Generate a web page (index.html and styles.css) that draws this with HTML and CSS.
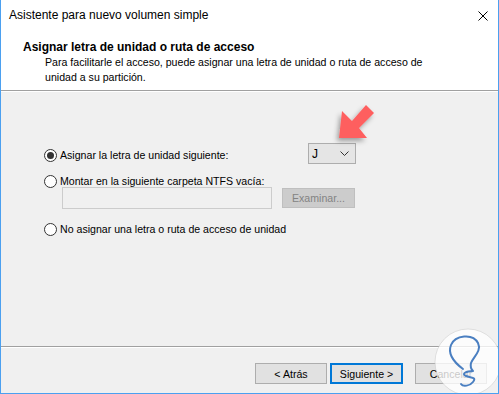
FILE: index.html
```html
<!DOCTYPE html>
<html lang="es">
<head>
    <meta charset="UTF-8">
    <title>Asistente para nuevo volumen simple</title>
    <link rel="stylesheet" href="styles.css">
</head>
<body>
    <div class="window">
        <div class="titlebar">
            <span class="title">Asistente para nuevo volumen simple</span>
            <svg class="close" width="10" height="10" viewBox="0 0 10 10">
                <path d="M0.5 0.5 L9.5 9.5 M9.5 0.5 L0.5 9.5" stroke="#000" stroke-width="1" fill="none"/>
            </svg>
        </div>

        <div class="header">
            <h1>Asignar letra de unidad o ruta de acceso</h1>
            <p class="description">Para facilitarle el acceso, puede asignar una letra de unidad o ruta de acceso de<br>unidad a su partición.</p>
        </div>

        <div class="content">
            <div class="option option-first">
                <div class="radio-label">
                    <span class="radio checked"></span>
                    <span>Asignar la letra de unidad siguiente:</span>
                </div>
                <div class="select">
                    <span class="select-value">J</span>
                    <svg width="9" height="5" viewBox="0 0 9 5">
                        <path d="M0.5 0.5 L4.5 4.5 L8.5 0.5" stroke="#333" stroke-width="1" fill="none"/>
                    </svg>
                </div>
            </div>

            <div class="option option-mount">
                <div class="radio-label">
                    <span class="radio"></span>
                    <span>Montar en la siguiente carpeta NTFS vacía:</span>
                </div>
            </div>

            <div class="path-row">
                <div class="path-field"></div>
                <div class="browse-btn">Examinar...</div>
            </div>

            <div class="option option-none">
                <div class="radio-label">
                    <span class="radio"></span>
                    <span>No asignar una letra o ruta de acceso de unidad</span>
                </div>
            </div>
        </div>

        <div class="footer">
            <div class="btn btn-back">&lt; Atrás</div>
            <div class="btn btn-next">Siguiente &gt;</div>
            <div class="btn btn-cancel">Cancelar</div>
        </div>

        <!-- flecha de anotación -->
        <svg class="arrow" width="60" height="60" viewBox="0 0 60 60">
            <defs>
                <filter id="sombra" x="-30%" y="-30%" width="160%" height="160%">
                    <feDropShadow dx="-2" dy="3" stdDeviation="2.5" flood-color="#000" flood-opacity="0.35"/>
                </filter>
            </defs>
            <polygon points="8,41 11,14 21,24 35,8 43,16 28,31 36,41" fill="#fe5f5f" filter="url(#sombra)"/>
        </svg>

        <!-- marca de agua -->
        <svg class="watermark" width="70" height="70" viewBox="0 0 70 70">
            <circle cx="35" cy="35" r="33" fill="rgba(255,255,255,0.78)" stroke="rgba(200,200,200,0.5)" stroke-width="1"/>
            <path d="M30 42 C22 36 14 28 18 18 C22 8 40 6 45 16 C49 24 40 30 38 36 C37 40 38 42 40 44 C33 44 28 47 33 49 C38 51 44 50 40 55 C37 59 30 60 28 57"
                  stroke="#4a7fc1" stroke-width="2" fill="none" stroke-linecap="round" stroke-linejoin="round"/>
        </svg>
    </div>
</body>
</html>
```

FILE: styles.css
```css
:root {
    --accent: #4ba0f0;
    --face: #f0f0f0;
    --button: #e1e1e1;
    --button-border: #adadad;
    --line: #a0a0a0;
}

body {
    margin: 0;
    font-family: 'Liberation Sans', Arial, sans-serif;
    font-size: 10.6px;
    color: #000;
}

.window {
    position: relative;
    width: 499px;
    height: 394px;
    box-sizing: border-box;
    border: 1px solid var(--accent);
    border-top: none;
    background-color: var(--face);
    display: flex;
    flex-direction: column;
    overflow: hidden;
}

.titlebar {
    height: 30px;
    background-color: #fff;
    display: flex;
    align-items: center;
    justify-content: space-between;
    padding: 0 10px 0 8px;
}

.title {
    font-size: 12px;
    line-height: 15px;
    margin-top: 1px;
}

.close {
    margin-top: 1px;
}

.header {
    height: 61px;
    box-sizing: border-box;
    background-color: #fff;
    padding: 10px 0 0 22px;
    border-bottom: 1px solid var(--line);
}

h1 {
    margin: 0;
    font-size: 12px;
    font-weight: bold;
    line-height: 15px;
}

.description {
    margin: 0 0 0 22px;
    line-height: 15px;
}

.content {
    flex: 1;
    border-top: 1px solid #fff;
    border-bottom: 1px solid var(--line);
    padding: 51px 0 0 43px;
}

.option {
    width: 312px;
    display: flex;
    align-items: center;
    justify-content: space-between;
}

.option-first {
    height: 21px;
}

.option-first .radio-label {
    margin-top: 3px;
}

.option-mount {
    height: 14px;
    margin-top: 10px;
}

.option-none {
    height: 14px;
    margin-top: 13px;
}

.radio-label {
    display: flex;
    align-items: center;
    gap: 3px;
    line-height: 15px;
}

.radio {
    width: 13px;
    height: 13px;
    box-sizing: border-box;
    border: 1px solid #333;
    border-radius: 50%;
    background-color: #fff;
    display: flex;
    align-items: center;
    justify-content: center;
}

.radio.checked::after {
    content: "";
    width: 7px;
    height: 7px;
    border-radius: 50%;
    background-color: #333;
}

.select {
    width: 48px;
    height: 21px;
    box-sizing: border-box;
    border: 1px solid var(--button-border);
    background-color: #e5e5e5;
    display: flex;
    align-items: center;
    justify-content: space-between;
    padding: 0 6px 0 3px;
    font-size: 12px;
}

.path-row {
    display: flex;
    align-items: center;
    gap: 10px;
    padding-left: 18px;
    margin-top: -1px;
}

.path-field {
    width: 210px;
    height: 22px;
    box-sizing: border-box;
    border: 1px solid #cccccc;
    background-color: var(--face);
}

.browse-btn {
    width: 73px;
    height: 20px;
    box-sizing: border-box;
    border: 1px solid #bfbfbf;
    background-color: #cccccc;
    color: #838383;
    display: flex;
    align-items: center;
    justify-content: center;
}

.footer {
    height: 46px;
    border-top: 1px solid #fff;
    display: flex;
    justify-content: flex-end;
    align-items: flex-start;
    padding: 15px 11px 0 0;
    box-sizing: border-box;
}

.btn {
    width: 72px;
    height: 21px;
    box-sizing: border-box;
    border: 1px solid var(--button-border);
    background-color: var(--button);
    display: flex;
    align-items: center;
    justify-content: center;
}

.btn-next {
    width: 73px;
    border: 2px solid #0078d7;
    margin-left: 3px;
}

.btn-cancel {
    margin-left: 12px;
}

.arrow {
    position: absolute;
    left: 330px;
    top: 97px;
}

.watermark {
    position: absolute;
    left: 432px;
    top: 327px;
}
```
